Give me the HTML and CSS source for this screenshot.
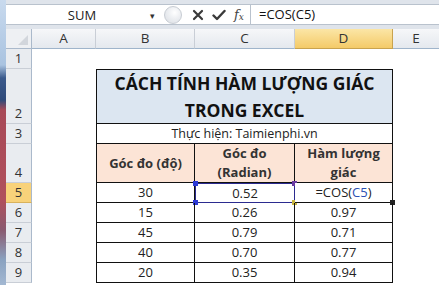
FILE: index.html
```html
<!DOCTYPE html>
<html>
<head>
<meta charset="utf-8">
<link rel="stylesheet" href="styles.css">
</head>
<body>
<div class="app">
  <div class="strip"></div>
  <div class="excel">
    <div class="fbar">
      <div class="namebox"><span class="name">SUM</span><span class="drop">&#9662;</span></div>
      <div class="btns">
        <span class="dot"></span>
        <svg class="ic" width="12" height="12" viewBox="0 0 12 12"><path d="M2 2 L10 10 M10 2 L2 10" stroke="#3a3a3a" stroke-width="2.2" stroke-linecap="round"/></svg>
        <svg class="ic" width="14" height="12" viewBox="0 0 14 12"><path d="M1.5 6.5 L5 10 L12.5 2" stroke="#3a3a3a" stroke-width="2.4" fill="none" stroke-linecap="round" stroke-linejoin="round"/></svg>
        <span class="fx">f<sub>x</sub></span>
      </div>
      <div class="formula">=COS(C5)</div>
    </div>
    <div class="sheet">
      <div class="corner"><span class="tri"></span></div>
      <div class="ch">A</div>
      <div class="ch">B</div>
      <div class="ch">C</div>
      <div class="ch sel">D</div>
      <div class="ch last">E</div>

      <div class="rh">1</div>
      <div class="blank span5"></div>

      <div class="rh">2</div>
      <div class="blank"></div>
      <div class="cell title span3">CÁCH TÍNH HÀM LƯỢNG GIÁC<br>TRONG EXCEL</div>
      <div class="blank"></div>

      <div class="rh">3</div>
      <div class="blank"></div>
      <div class="cell first span3 credit">Thực hiện: Taimienphi.vn</div>
      <div class="blank"></div>

      <div class="rh">4</div>
      <div class="blank"></div>
      <div class="cell first head">Góc đo (độ)</div>
      <div class="cell head">Góc đo<br>(Radian)</div>
      <div class="cell head">Hàm lượng<br>giác</div>
      <div class="blank"></div>

      <div class="rh rsel">5</div>
      <div class="blank"></div>
      <div class="cell first">30</div>
      <div class="cell ref">0.52<i class="q q1"></i><i class="q q2"></i><i class="q q3"></i><i class="q q4"></i></div>
      <div class="cell edit">=COS(<span class="blue">C5</span>)<i class="handle"></i></div>
      <div class="blank"></div>

      <div class="rh">6</div>
      <div class="blank"></div>
      <div class="cell first">15</div>
      <div class="cell">0.26</div>
      <div class="cell">0.97</div>
      <div class="blank"></div>

      <div class="rh">7</div>
      <div class="blank"></div>
      <div class="cell first">45</div>
      <div class="cell">0.79</div>
      <div class="cell">0.71</div>
      <div class="blank"></div>

      <div class="rh">8</div>
      <div class="blank"></div>
      <div class="cell first">40</div>
      <div class="cell">0.70</div>
      <div class="cell">0.77</div>
      <div class="blank"></div>

      <div class="rh">9</div>
      <div class="blank"></div>
      <div class="cell first">20</div>
      <div class="cell">0.35</div>
      <div class="cell">0.94</div>
      <div class="blank"></div>
    </div>
  </div>
</div>
</body>
</html>
```

FILE: styles.css
```css
* { box-sizing: border-box; }
html, body { margin: 0; padding: 0; }
body {
  width: 439px;
  height: 285px;
  overflow: hidden;
  background: #fff;
  font-family: "Open Sans", "Noto Sans", sans-serif;
  color: #222;
}
.app {
  display: flex;
  height: 285px;
}
.strip {
  width: 6px;
  flex: none;
  background: linear-gradient(to bottom, #c9daee 0px, #a9c3e0 65px, #3b5a8c 78px, #2e4a7a 100px, #a84a58 110px, #b0505c 200px, #8a5a70 230px, #8aa2c0 260px, #a3b8d2 285px);
}
.excel {
  flex: 1;
  display: flex;
  flex-direction: column;
  background: #fff;
  min-width: 0;
}
.fbar {
  height: 29px;
  flex: none;
  background: #dfe4eb;
  padding: 4px 0 4px 0;
  display: flex;
}
.namebox {
  width: 160px;
  flex: none;
  background: #fff;
  border-top: 1px solid #b9c2cd;
  border-bottom: 1px solid #b9c2cd;
  display: flex;
  align-items: center;
}
.name {
  flex: 1;
  text-align: center;
  font-size: 13px;
  color: #222;
  padding-left: 8px;
}
.drop {
  font-size: 9px;
  color: #333;
  width: 16px;
  text-align: left;
  margin-top: 2px;
}
.btns {
  width: 84px;
  flex: none;
  background: #fff;
  border-top: 1px solid #b9c2cd;
  border-bottom: 1px solid #b9c2cd;
  display: flex;
  align-items: center;
  gap: 8px;
}
.dot {
  width: 18px;
  height: 18px;
  border-radius: 50%;
  margin-left: -2px;
  margin-right: 2px;
  border: 1px solid #c7ccd3;
  background: radial-gradient(circle at 60% 35%, #fff 0, #eef0f3 40%, #d9dde3 100%);
  flex: none;
}
.ic { flex: none; }
.fx {
  font-family: "DejaVu Serif", "Liberation Serif", serif;
  font-style: italic;
  font-size: 13px;
  color: #444;
  line-height: 1;
}
.fx sub { font-size: 9px; vertical-align: -1px; }
.formula {
  flex: 1;
  background: #fff;
  border: 1px solid #b9c2cd;
  border-right: none;
  font-size: 13px;
  padding-left: 8px;
  line-height: 18px;
  color: #111;
}

.sheet {
  display: grid;
  grid-template-columns: 26px 64px 99px 100px 98px 1fr;
  grid-template-rows: 20px 20px 55px 20px 39px 20px 20px 20px 20px 20px;
  font-size: 13px;
}
.corner {
  background: #eef0f3;
  border-right: 1px solid #aab9cb;
  border-bottom: 1px solid #aab9cb;
  position: relative;
}
.tri {
  position: absolute;
  right: 3px;
  bottom: 3px;
  width: 0;
  height: 0;
  border-left: 10px solid transparent;
  border-bottom: 10px solid #d2d6dc;
}
.ch {
  background: linear-gradient(to bottom, #f6f7f9, #e4e8ee);
  border-right: 1px solid #c9ced6;
  border-bottom: 1px solid #9fb4cb;
  text-align: center;
  line-height: 19px;
  color: #333;
  font-size: 13.5px;
}
.ch.last { border-right: none; }
.ch.sel {
  background: linear-gradient(to bottom, #fbe6a6, #f4ca68);
  border-right: 1px solid #c9a34e;
  border-bottom: 1px solid #c9a34e;
}
.rh {
  background: #e9ecf0;
  border-right: 1px solid #aab9cb;
  border-bottom: 1px solid #c9ced6;
  display: flex;
  align-items: flex-end;
  justify-content: center;
  color: #333;
  line-height: 19px;
}
.rh.rsel {
  background: #f8d27a;
  border-bottom-color: #d9b25c;
}
.blank { background: #fff; }
.span5 { grid-column: span 5; }
.span3 { grid-column: span 3; }
.cell {
  border-right: 1px solid #111;
  border-bottom: 1px solid #111;
  display: flex;
  align-items: center;
  justify-content: center;
  text-align: center;
  line-height: 19px;
  position: relative;
  color: #222;
}
.cell.first { border-left: 1px solid #111; }
.title {
  border: 1px solid #111;
  background: #dce6f1;
  font-weight: 700;
  font-size: 17.5px;
  line-height: 27px;
  color: #111;
  padding-top: 1px;
}
.credit { font-size: 12.5px; }
.head {
  background: #fce4d6;
  font-weight: 700;
  color: #333;
  font-size: 13px;
}
.ref {
  border: 1px solid #2b2b8f;
}
.q {
  position: absolute;
  width: 5px;
  height: 5px;
  background: #2d3ad6;
}
.q1 { left: -3px; top: -3px; }
.q2 { left: -3px; bottom: -3px; }
.q3 { right: -3px; top: -3px; background: #6a3aa0; }
.q4 { right: -3px; bottom: -3px; background: #c9b640; }
.edit { background: #fff; }
.blue { color: #2c4fb3; }
.handle {
  position: absolute;
  right: -3px;
  bottom: -3px;
  width: 5px;
  height: 5px;
  background: #222;
}
```
